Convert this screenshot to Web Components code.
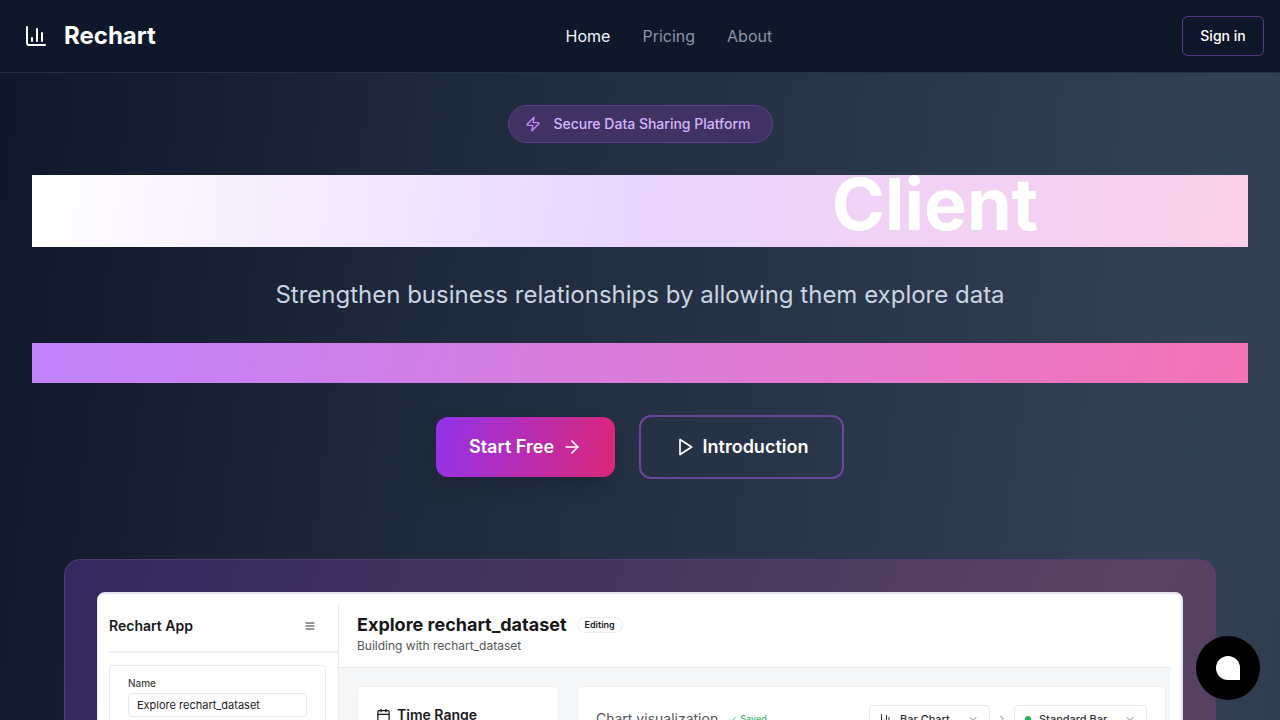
<!DOCTYPE html>
<html lang="en">
<head>
<meta charset="utf-8">
<meta name="viewport" content="width=device-width, initial-scale=1">
<title>Rechart</title>
<style>
html{scrollbar-width:none}
body{margin:0;font-family:Inter,"Liberation Sans",sans-serif;color:#f8fafc;background:#0f172a}
</style>
</head>
<body>
<rc-page></rc-page>
<script>
const define=(name,html)=>customElements.define(name,class extends HTMLElement{
  constructor(){super();this.attachShadow({mode:"open"}).innerHTML="<style>*{box-sizing:border-box}</style>"+html;}
});

const ICONS={
  chart:'<path d="M3 3v16a2 2 0 0 0 2 2h16"/><path d="M18 17V9"/><path d="M13 17V5"/><path d="M8 17v-3"/>',
  zap:'<path d="M4 14a1 1 0 0 1-.78-1.63l9.9-10.2a.5.5 0 0 1 .86.46l-1.92 6.02A1 1 0 0 0 13 10h7a1 1 0 0 1 .78 1.63l-9.9 10.2a.5.5 0 0 1-.86-.46l1.92-6.02A1 1 0 0 0 11 14z"/>',
  arrow:'<path d="M5 12h14"/><path d="m12 5 7 7-7 7"/>',
  play:'<path d="M6 3 20 12 6 21z"/>',
  menu:'<path d="M4 6h16M4 12h16M4 18h16"/>',
  calendar:'<path d="M8 2v4M16 2v4M3 10h18"/><rect x="3" y="4" width="18" height="18" rx="2"/>',
  check:'<path d="M20 6 9 17l-5-5"/>',
  down:'<path d="m6 9 6 6 6-6"/>',
  right:'<path d="m9 18 6-6-6-6"/>'
};
customElements.define("rc-icon",class extends HTMLElement{
  constructor(){
    super();
    this.attachShadow({mode:"open"});
  }
  connectedCallback(){
    this.shadowRoot.innerHTML=`<style>:host{display:block;flex:none;width:16px;height:16px}svg{display:block;width:100%;height:100%}</style>
    <svg viewBox="0 0 24 24" fill="none" stroke="currentColor" stroke-width="2" stroke-linecap="round" stroke-linejoin="round" aria-hidden="true">${ICONS[this.getAttribute("name")]}</svg>`;
  }
});

define("rc-header",`<style>
:host{display:block;background:#0f172a;border-bottom:1px solid #253044}
header{display:flex;justify-content:space-between;align-items:center;height:72px;padding:0 16px 0 24px}
.brand{display:flex;align-items:center;gap:16px;color:#fff;text-decoration:none;font-size:24px;line-height:32px;font-weight:700}
.brand rc-icon{width:24px;height:24px}
nav{display:flex;gap:32px;font-size:16px;line-height:24px}
nav a{color:#8b95a7;text-decoration:none}
nav a[aria-current]{color:#f1f5f9}
button{min-width:82px;height:40px;padding:0 16px;border:1px solid #57398c;border-radius:6px;background:none;color:#fff;font:500 14px/20px Inter,sans-serif}
</style>
<header>
<a class="brand" href="#"><rc-icon name="chart"></rc-icon><span>Rechart</span></a>
<nav><a href="#" aria-current="page">Home</a><a href="#pricing">Pricing</a><a href="#about">About</a></nav>
<button type="button">Sign in</button>
</header>`);

define("rc-badge",`<style>
:host{display:flex;align-items:center;gap:8px;min-width:265px;height:38px;padding:0 16px;border:1px solid #5d3f8c;border-radius:19px;background:#403363;color:#d8b4fe;font-size:14px;line-height:20px;font-weight:500;box-sizing:border-box}
rc-icon{color:#c084fc}
span{flex:1;text-align:center}
</style><rc-icon name="zap"></rc-icon><span><slot></slot></span>`);

define("rc-actions",`<style>
:host{display:flex;flex-wrap:wrap;justify-content:center;align-items:center;gap:24px}
button{display:flex;align-items:center;justify-content:center;gap:8px;padding:0 32px;height:60px;border:0;border-radius:12px;color:#fff;font:600 18px/28px Inter,sans-serif;font-optical-sizing:none}
button rc-icon{width:20px;height:20px}
.start{min-width:179px;background:linear-gradient(100deg,#9333ea,#db2777);box-shadow:0 10px 20px -4px rgba(15,23,42,.4)}
.intro{min-width:205px;height:64px;background:none;border:2px solid #6a469c}
</style>
<button type="button" class="start"><span>Start Free</span><rc-icon name="arrow"></rc-icon></button>
<button type="button" class="intro"><rc-icon name="play"></rc-icon><span>Introduction</span></button>`);

define("rc-hero",`<style>
:host{display:flex;flex-direction:column;align-items:center;gap:32px;padding:32px 32px 80px}
h1{align-self:stretch;height:72px;margin:0;text-align:center;font-size:72px;line-height:58px;font-weight:700;color:#fff;background:linear-gradient(97deg,#fff,#e9d5ff 50%,#fbcfe8)}
h1 span{padding-left:590px}
p{margin:0;font-size:24px;line-height:32px;color:#cbd5e1;text-align:center;font-optical-sizing:none}
.bar{align-self:stretch;height:40px;background:linear-gradient(100deg,#c084fc,#f472b6)}
</style>
<rc-badge>Secure Data Sharing Platform</rc-badge>
<h1><span>Client</span></h1>
<p>Strengthen business relationships by allowing them explore data</p>
<div class="bar"></div>
<rc-actions></rc-actions>`);

define("rc-sidebar",`<style>
:host{display:block;border-right:1px solid #ebebed}
.top{display:flex;align-items:center;justify-content:space-between;height:49px;padding:0 22px 4px 0;border-bottom:2px solid #f0f0f1}
h2{margin:0;font-size:14px;line-height:20px;font-weight:600}
.top rc-icon{width:12px;height:12px;color:#333}
form{margin:12px 12px 0 0;padding:11px 18px;border:1px solid #e9eaec;border-radius:4px;height:320px}
label{display:block;font-size:10px;line-height:12px;font-weight:500;color:#444;margin:0 0 4px}
input{display:block;width:100%;height:24px;padding:0 8px;border:1px solid #e8e8ea;border-radius:4px;font:11px/16px Inter,sans-serif;color:#222;background:#fff}
</style>
<div class="top"><h2>Rechart App</h2><rc-icon name="menu"></rc-icon></div>
<form><label for="name">Name</label><input id="name" value="Explore rechart_dataset"></form>`);

define("rc-picker",`<style>
:host{display:flex;align-items:center;gap:8px;height:28px;padding:0 10px;border:1px solid #e7e8ea;border-radius:4px;box-sizing:border-box;color:#333}
rc-icon{width:12px;height:12px;color:#888}
</style><slot name="mark"></slot><slot></slot><rc-icon name="down"></rc-icon>`);

define("rc-workspace",`<style>
:host{display:flex;flex-direction:column;min-width:0}
header{height:64px;padding:9px 18px 0;border-bottom:1px solid #e6e7e9}
.title{display:flex;align-items:center;gap:10px}
h2{margin:0;font-size:18px;line-height:24px;font-weight:700}
.tag{padding:0 7px;border:1px solid #ebebed;border-radius:8px;font-size:9px;line-height:14px;font-weight:600}
p{margin:0;font-size:12px;line-height:18px;color:#555}
.body{flex:1;display:grid;grid-template-columns:202px 1fr;gap:18px;padding:18px 4px 18px 18px;background:#f5f6f8}
section{background:#fff;border:1px solid #eceef0;border-radius:4px;padding:18px}
h3{display:flex;align-items:center;gap:6px;margin:0;font-size:14px;line-height:20px;font-weight:600}
h3 rc-icon{width:15px;height:15px}
.row{display:flex;align-items:center;gap:10px}
.row h3{font-weight:400;color:#555}
.saved{display:flex;align-items:center;gap:3px;font-size:9px;line-height:12px;font-weight:500;color:#41b66b;margin-right:auto}
.saved rc-icon{width:9px;height:9px}
.row>rc-icon{width:12px;height:12px;color:#888;margin:0 -4px}
rc-picker{width:121px}rc-picker.style{width:133px}
.row rc-icon[slot]{width:12px;height:12px}
i{flex:none;width:6px;height:6px;border-radius:50%;background:#22b857}
select{flex:1;min-width:0;appearance:none;border:0;padding:0;background:none;font:500 11px/16px Inter,sans-serif;color:#333}
</style>
<header><div class="title"><h2>Explore rechart_dataset</h2><span class="tag">Editing</span></div><p>Building with rechart_dataset</p></header>
<div class="body">
<section><h3><rc-icon name="calendar"></rc-icon><span>Time Range</span></h3></section>
<section><div class="row"><h3>Chart visualization</h3><span class="saved"><rc-icon name="check"></rc-icon><span>Saved</span></span>
<rc-picker><rc-icon slot="mark" name="chart"></rc-icon><select aria-label="Chart type"><option>Bar Chart</option></select></rc-picker>
<rc-icon name="right"></rc-icon>
<rc-picker class="style"><i slot="mark"></i><select aria-label="Chart style"><option>Standard Bar</option></select></rc-picker></div></section>
</div>`);

define("rc-preview",`<style>
:host{display:block;margin:0 64px;padding:32px;border:1px solid #573b76;border-radius:16px;background:linear-gradient(110deg,#33295f,#43335d 35%,#584362 80%,#57405f)}
.app{display:grid;grid-template-columns:230px 1fr;min-height:440px;padding:10px 11px;border:1px solid #e9e3ee;border-top-width:2px;border-right-width:2px;border-radius:8px;background:#fff;color:#18181b}
</style><div class="app"><rc-sidebar></rc-sidebar><rc-workspace></rc-workspace></div>`);

define("rc-chat",`<style>
:host{position:fixed;right:20px;bottom:20px}
button{display:grid;place-items:center;width:64px;height:64px;border:0;border-radius:50%;background:#000;padding:0}
svg{display:block;width:24px;height:24px}
</style><button type="button" aria-label="Open chat"><svg viewBox="0 0 24 24"><path d="M12 0a12 12 0 0 0 0 24h12V12A12 12 0 0 0 12 0z" fill="#fff"/></svg></button>`);

define("rc-page",`<style>
:host{display:block;min-height:100vh;padding-bottom:64px;box-sizing:border-box;background:linear-gradient(97deg,#0f172a,#1e293b 32%,#334155 88%,#2f3b4e)}
</style><rc-header></rc-header><main><rc-hero></rc-hero><rc-preview></rc-preview></main><rc-chat></rc-chat>`);
</script>
</body>
</html>
